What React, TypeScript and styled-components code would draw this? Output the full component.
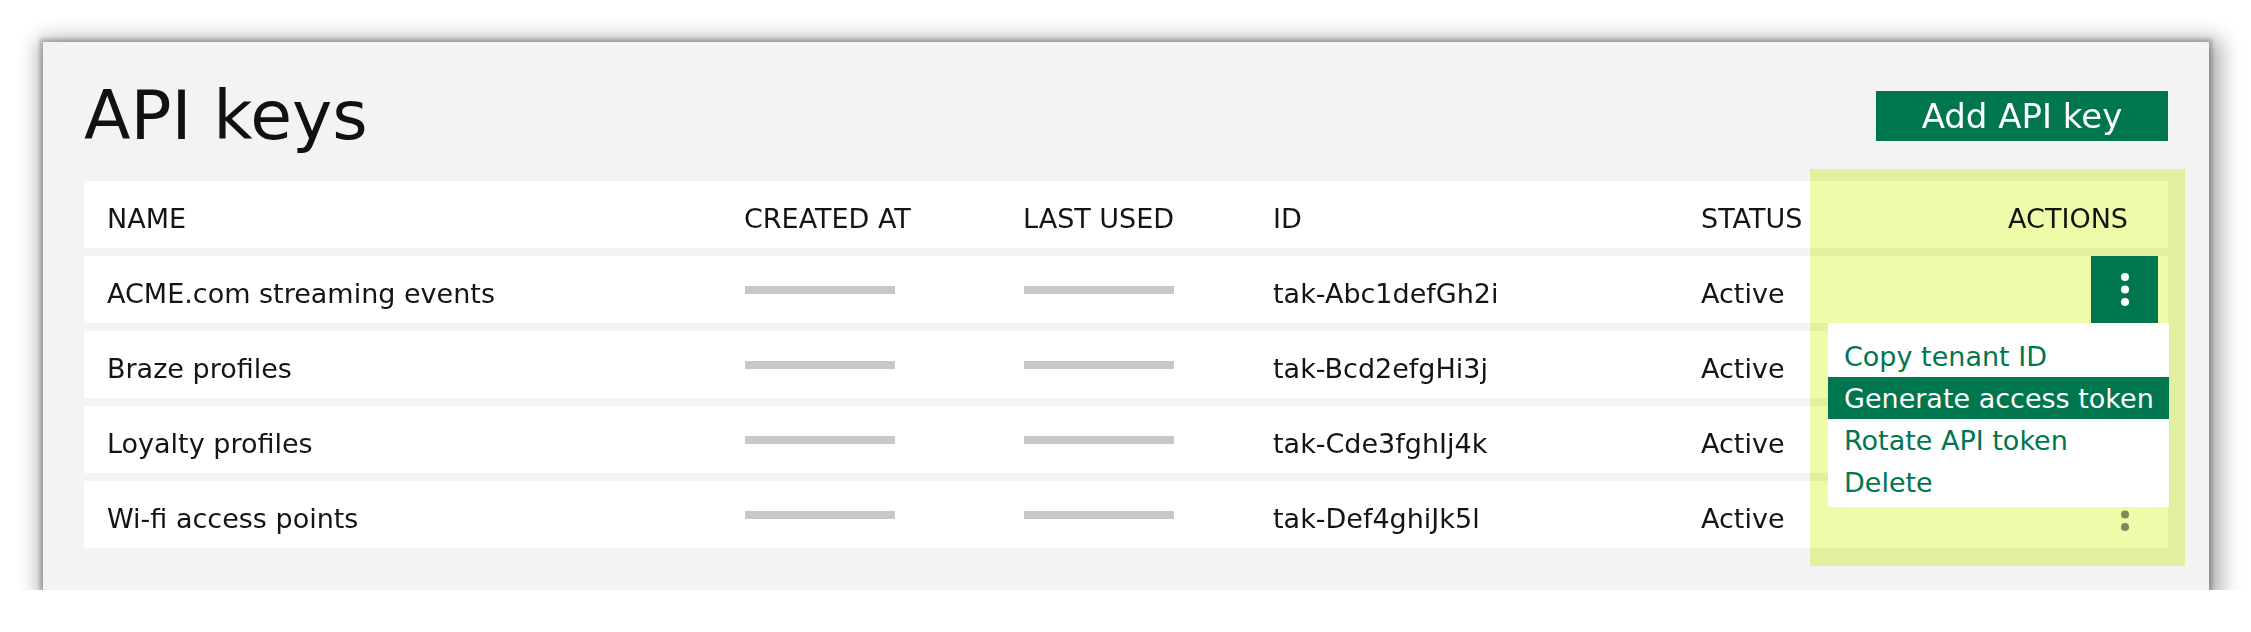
import React from "react";
import styled, { createGlobalStyle, css } from "styled-components";

const GREEN = "#00764f";
const FONT = `"DejaVu Sans", "Noto Sans", sans-serif`;

const GlobalStyle = createGlobalStyle`
  html, body { margin: 0; padding: 0; background: #ffffff; }
  body { font-family: ${FONT}; color: #141414; }
  * { box-sizing: border-box; }
`;

const Page = styled.div`
  padding: 42px 0 0 43px;
`;

const Panel = styled.section`
  width: 2166px;
  height: 548px;
  background: #f2f3f2;
  padding: 40px 41px 0;
  box-shadow: 0 0 4px 3px rgba(0, 0, 0, 0.24), 4px 5px 20px 8px rgba(0, 0, 0, 0.32);
`;

const Header = styled.header`
  height: 99px;
  display: flex;
  justify-content: space-between;
  align-items: flex-start;
`;

const Title = styled.h1`
  margin: 0;
  font-family: ${FONT};
  font-weight: 400;
  font-size: 68px;
  line-height: 68px;
  color: #111111;
`;

const AddButton = styled.button`
  margin-top: 9px;
  width: 292px;
  height: 50px;
  border: none;
  border-radius: 0;
  background: ${GREEN};
  color: #ffffff;
  font-family: ${FONT};
  font-size: 34px;
  line-height: 50px;
  padding: 0;
  display: flex;
  align-items: center;
  justify-content: center;
  cursor: pointer;
`;

const Table = styled.div`
  position: relative;
  display: flex;
  flex-direction: column;
  gap: 8px;
`;

const Row = styled.div`
  display: grid;
  grid-template-columns: 637px 279px 250px 428px 1fr auto;
  align-items: center;
  height: 67px;
  padding-left: 23px;
  padding-right: 10px;
  background: #ffffff;
`;

const Cell = styled.div`
  font-size: 27px;
  line-height: 1;
  padding-top: 7px;
  white-space: nowrap;
  color: #141414;
`;

const HeadCell = styled(Cell)<{ $end?: boolean }>`
  text-transform: uppercase;
  ${(p) =>
    p.$end &&
    css`
      justify-self: end;
      padding-right: 30px;
    `}
`;

const Bar = styled.div`
  width: 150px;
  height: 8px;
  margin-left: 1px;
  background: #c8c8c8;
`;

const ActionCell = styled.div<{ $open?: boolean }>`
  justify-self: end;
  height: 67px;
  ${(p) =>
    p.$open &&
    css`
      position: relative;
      z-index: 3;
    `}
`;

const KebabButton = styled.button<{ $active?: boolean }>`
  width: 67px;
  height: 67px;
  border: none;
  padding: 0;
  display: flex;
  align-items: center;
  justify-content: center;
  background: ${(p) => (p.$active ? GREEN : "transparent")};
  color: ${(p) => (p.$active ? "#ffffff" : "#8a8a8a")};
  cursor: pointer;
`;

const Menu = styled.ul`
  position: absolute;
  top: 100%;
  right: -11px;
  width: 341px;
  margin: 0;
  padding: 12px 0 4px;
  list-style: none;
  background: #ffffff;
`;

const MenuItem = styled.li<{ $active?: boolean }>`
  height: 42px;
  display: flex;
  align-items: center;
  padding-left: 16px;
  font-size: 27px;
  line-height: 1;
  white-space: nowrap;
  color: ${(p) => (p.$active ? "#ffffff" : GREEN)};
  background: ${(p) => (p.$active ? GREEN : "transparent")};
  cursor: pointer;
`;

const Highlight = styled.div`
  position: absolute;
  top: -12px;
  bottom: -18px;
  right: -17px;
  width: 375px;
  background: #eefba8;
  mix-blend-mode: multiply;
  pointer-events: none;
  z-index: 1;
`;

const Dots = () => (
  <svg width="8" height="33" viewBox="0 0 8 33" aria-hidden="true">
    <circle cx="4" cy="4" r="4" fill="currentColor" />
    <circle cx="4" cy="16.5" r="4" fill="currentColor" />
    <circle cx="4" cy="29" r="4" fill="currentColor" />
  </svg>
);

const keys = [
  { name: "ACME.com streaming events", id: "tak-Abc1defGh2i", status: "Active" },
  { name: "Braze profiles", id: "tak-Bcd2efgHi3j", status: "Active" },
  { name: "Loyalty profiles", id: "tak-Cde3fghIj4k", status: "Active" },
  { name: "Wi-fi access points", id: "tak-Def4ghiJk5l", status: "Active" },
];

const menuItems = ["Copy tenant ID", "Generate access token", "Rotate API token", "Delete"];

export default function App() {
  return (
    <>
      <GlobalStyle />
      <Page>
        <Panel>
          <Header>
            <Title>API keys</Title>
            <AddButton>Add API key</AddButton>
          </Header>
          <Table>
            <Row>
              <HeadCell>Name</HeadCell>
              <HeadCell>Created at</HeadCell>
              <HeadCell>Last used</HeadCell>
              <HeadCell>ID</HeadCell>
              <HeadCell>Status</HeadCell>
              <HeadCell $end>Actions</HeadCell>
            </Row>
            {keys.map((k, i) => (
              <Row key={k.id}>
                <Cell>{k.name}</Cell>
                <Bar />
                <Bar />
                <Cell>{k.id}</Cell>
                <Cell>{k.status}</Cell>
                <ActionCell $open={i === 0}>
                  <KebabButton $active={i === 0} aria-label="More actions">
                    <Dots />
                  </KebabButton>
                  {i === 0 && (
                    <Menu>
                      {menuItems.map((m, j) => (
                        <MenuItem key={m} $active={j === 1}>
                          {m}
                        </MenuItem>
                      ))}
                    </Menu>
                  )}
                </ActionCell>
              </Row>
            ))}
            <Highlight />
          </Table>
        </Panel>
      </Page>
    </>
  );
}
